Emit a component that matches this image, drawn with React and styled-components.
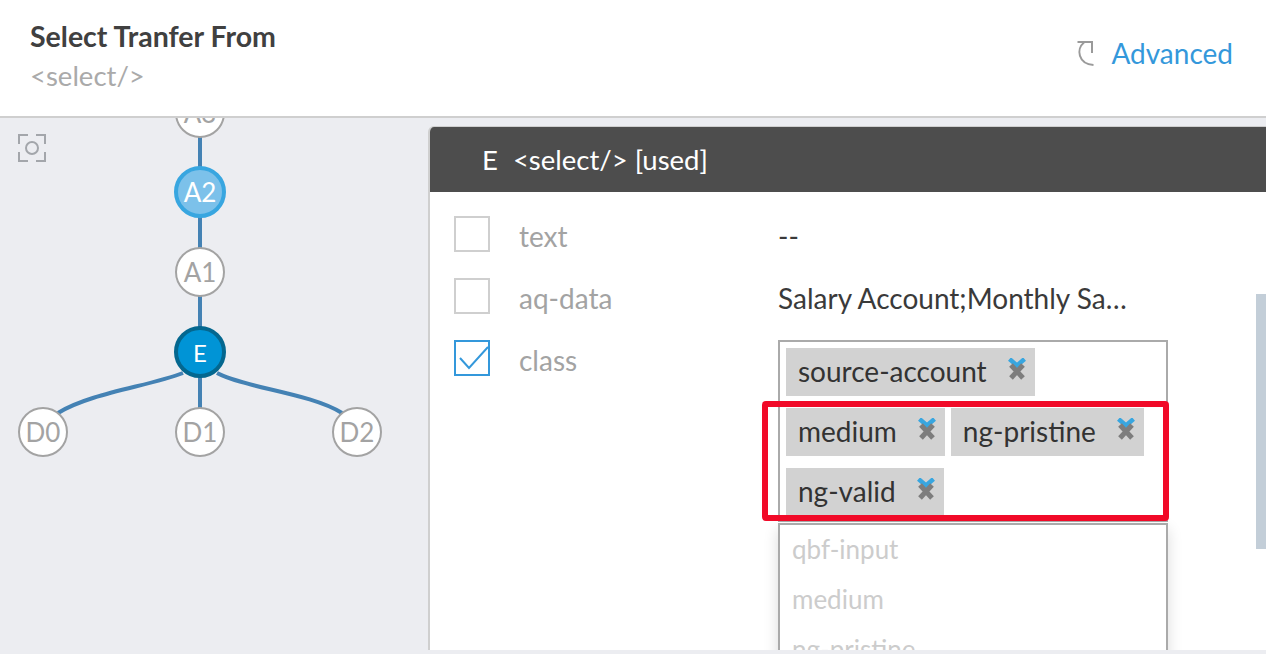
import React from "react";
import styled, { createGlobalStyle } from "styled-components";

const GlobalStyle = createGlobalStyle`
  html, body {
    margin: 0;
    padding: 0;
    height: 100%;
    overflow: hidden;
  }
  body {
    font-family: Lato, "Noto Sans", sans-serif;
    background: #ecedf1;
  }
`;

const Page = styled.div`
  width: 1266px;
  height: 654px;
  display: flex;
  flex-direction: column;
  overflow: hidden;
`;

const Header = styled.header`
  box-sizing: border-box;
  height: 118px;
  flex: none;
  background: #fff;
  border-bottom: 2px solid #cfcfcf;
  display: flex;
  align-items: flex-start;
  justify-content: space-between;
  padding: 19px 33px 0 30px;
`;

const TitleBlock = styled.div`
  display: flex;
  flex-direction: column;
  gap: 6px;
`;

const Title = styled.h1`
  margin: 0;
  font-size: 28.5px;
  line-height: 34px;
  font-weight: 700;
  color: #404040;
`;

const Subtitle = styled.div`
  font-size: 27.5px;
  line-height: 34px;
  color: #aaa;
`;

const AdvancedLink = styled.div`
  display: flex;
  align-items: center;
  gap: 16px;
  margin-top: 17px;
  font-size: 28px;
  line-height: 34px;
  color: #3498db;
`;

const Main = styled.main`
  flex: 1;
  min-height: 0;
  display: flex;
  padding-bottom: 4px;
`;

const Canvas = styled.section`
  position: relative;
  width: 428px;
  flex: none;
  overflow: hidden;
`;

const FocusButton = styled.svg`
  position: absolute;
  left: 18px;
  top: 16px;
`;

const Edges = styled.svg`
  position: absolute;
  left: 0;
  top: 0;
`;

const Node = styled.div`
  position: absolute;
  box-sizing: border-box;
  transform: translate(-50%, -50%);
  display: flex;
  align-items: center;
  justify-content: center;
  border-radius: 50%;
  width: ${(p) => (p.$kind === "plain" ? "50px" : "52px")};
  height: ${(p) => (p.$kind === "plain" ? "50px" : "52px")};
  left: ${(p) => p.$x}px;
  top: ${(p) => p.$y}px;
  font-size: ${(p) => (p.$kind === "current" ? "24px" : "26px")};
  border: ${(p) =>
    p.$kind === "current"
      ? "4px solid #04678f"
      : p.$kind === "hover"
      ? "4px solid #38a6e0"
      : "2px solid #a3a3a3"};
  background: ${(p) =>
    p.$kind === "current" ? "#0094d6" : p.$kind === "hover" ? "#7cc1ea" : "#fff"};
  color: ${(p) => (p.$kind === "plain" ? "#a3a3a3" : "#fff")};
`;

const Panel = styled.section`
  position: relative;
  flex: 1;
  min-width: 0;
  margin-top: 8px;
  background: #fff;
  border-left: 2px solid #cfcfcf;
  border-top: 1px solid #cfcfcf;
  border-top-left-radius: 6px;
  overflow: hidden;
`;

const PanelHeader = styled.div`
  height: 65px;
  background: #4d4d4d;
  color: #fff;
  display: flex;
  align-items: center;
  gap: 15px;
  padding-left: 52px;
  font-size: 27.5px;
`;

const Rows = styled.div`
  padding: 24px 0 0 24px;
  display: flex;
  flex-direction: column;
  gap: 22px;
`;

const Row = styled.div`
  display: grid;
  grid-template-columns: 65px 259px 1fr;
  align-items: start;
`;

const Checkbox = styled.div`
  box-sizing: border-box;
  width: 36px;
  height: 36px;
  background: #fff;
  border: 2px solid ${(p) => (p.$checked ? "#3498db" : "#cfcfcf")};
`;

const CheckSvg = styled.svg`
  display: block;
`;

const Label = styled.div`
  font-size: 28px;
  line-height: 40px;
  color: #a3a3a3;
`;

const Value = styled.div`
  width: 352px;
  font-size: 28px;
  line-height: 40px;
  color: #3a3a3a;
  white-space: nowrap;
  overflow: hidden;
  text-overflow: ellipsis;
`;

const Picker = styled.div`
  position: relative;
  width: 390px;
`;

const TagBox = styled.div`
  box-sizing: border-box;
  height: 182px;
  padding: 6px 6px 0;
  border: 2px solid #aaa;
  display: flex;
  flex-wrap: wrap;
  align-content: flex-start;
  gap: 12px 6px;
`;

const Tag = styled.div`
  box-sizing: border-box;
  height: 48px;
  background: #d2d2d2;
  display: flex;
  align-items: center;
  gap: 21px;
  padding: 0 9px 2px 12px;
  font-size: 28px;
  color: #333;
`;

const RemoveSvg = styled.svg`
  align-self: flex-start;
  margin-top: 10px;
`;

const Highlight = styled.div`
  position: absolute;
  left: -16px;
  top: 61px;
  width: 407px;
  height: 120px;
  box-sizing: border-box;
  border: 6px solid #f10a28;
  border-radius: 4px;
`;

const Dropdown = styled.ul`
  list-style: none;
  margin: 1px 0 0;
  padding: 0;
  box-sizing: border-box;
  background: #fff;
  border: 2px solid #aaa;
  box-shadow: 0 6px 14px rgba(0, 0, 0, 0.14);
`;

const Option = styled.li`
  height: 50px;
  padding-left: 12px;
  font-size: 26px;
  line-height: 48px;
  color: #ccc;
`;

const Scrollbar = styled.div`
  position: absolute;
  right: 0;
  top: 167px;
  width: 10px;
  height: 255px;
  background: #c3ced8;
`;

const RemoveIcon = () => (
  <RemoveSvg width="18" height="23" viewBox="0 0 18 23" fill="none">
    <path d="M1.5 1 L9 7.5 L16.5 1" stroke="#38a6e0" strokeWidth="4.5" />
    <path d="M3 7 L15 20 M15 7 L3 20" stroke="#7d7d7d" strokeWidth="5" />
  </RemoveSvg>
);

const ReloadIcon = () => (
  <svg width="18" height="26" viewBox="0 0 18 26" fill="none" stroke="#9a9a9a" strokeWidth="2">
    <path d="M0.5 2 H15 V13" />
    <path d="M7 2.5 C-1 9 1 24 16.5 25" />
  </svg>
);

const CheckMark = () => (
  <CheckSvg width="32" height="32" viewBox="0 0 32 32" fill="none" stroke="#3498db" strokeWidth="2">
    <path d="M4 16 L13 26 L32 5" />
  </CheckSvg>
);

const nodes = [
  { name: "A3", x: 200, y: -5, kind: "plain" },
  { name: "A2", x: 200, y: 74, kind: "hover" },
  { name: "A1", x: 200, y: 154, kind: "plain" },
  { name: "E", x: 200, y: 234, kind: "current" },
  { name: "D0", x: 43, y: 314, kind: "plain" },
  { name: "D1", x: 200, y: 314, kind: "plain" },
  { name: "D2", x: 357, y: 314, kind: "plain" },
];

const tags = ["source-account", "medium", "ng-pristine", "ng-valid"];
const options = ["qbf-input", "medium", "ng-pristine"];

const App = () => {
  return (
    <Page>
      <GlobalStyle />
      <Header>
        <TitleBlock>
          <Title>Select Tranfer From</Title>
          <Subtitle>&lt;select/&gt;</Subtitle>
        </TitleBlock>
        <AdvancedLink>
          <ReloadIcon />
          Advanced
        </AdvancedLink>
      </Header>
      <Main>
        <Canvas>
          <FocusButton width="28" height="28" viewBox="0 0 28 28" fill="none" stroke="#a3a6ab" strokeWidth="2">
            <path d="M1 10 V1 H10 M18 1 H27 V10 M27 18 V27 H18 M10 27 H1 V18" />
            <circle cx="14" cy="14" r="6" />
          </FocusButton>
          <Edges width="428" height="532" viewBox="0 0 428 532" fill="none" stroke="#4482b4" strokeWidth="4">
            <path d="M200 0 V314" />
            <path d="M183 255 C150 268 90 275 58 295" />
            <path d="M217 255 C245 270 310 275 342 295" />
          </Edges>
          {nodes.map((n) => (
            <Node key={n.name} $x={n.x} $y={n.y} $kind={n.kind}>
              {n.name}
            </Node>
          ))}
        </Canvas>
        <Panel>
          <PanelHeader>
            <span>E</span>
            <span>&lt;select/&gt; [used]</span>
          </PanelHeader>
          <Rows>
            <Row>
              <Checkbox />
              <Label>text</Label>
              <Value>--</Value>
            </Row>
            <Row>
              <Checkbox />
              <Label>aq-data</Label>
              <Value>Salary Account;Monthly Salary Account</Value>
            </Row>
            <Row>
              <Checkbox $checked>
                <CheckMark />
              </Checkbox>
              <Label>class</Label>
              <Picker>
                <TagBox>
                  {tags.map((t) => (
                    <Tag key={t}>
                      {t}
                      <RemoveIcon />
                    </Tag>
                  ))}
                </TagBox>
                <Dropdown>
                  {options.map((o) => (
                    <Option key={o}>{o}</Option>
                  ))}
                </Dropdown>
                <Highlight />
              </Picker>
            </Row>
          </Rows>
          <Scrollbar />
        </Panel>
      </Main>
    </Page>
  );
};

export default App;
